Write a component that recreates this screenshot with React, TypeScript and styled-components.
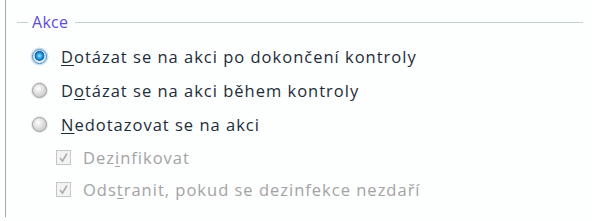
import React from "react";
import styled, { createGlobalStyle } from "styled-components";

const Global = createGlobalStyle`
  html, body { margin: 0; padding: 0; background: #ffffff; }
  body { font-family: "Open Sans", "Noto Sans", sans-serif; }
`;

const Page = styled.div`
  width: 592px;
  height: 221px;
  padding-left: 5px;
  box-sizing: border-box;
  background: #fdfefe;
`;

const Frame = styled.div`
  height: 217px;
  border-left: 1px solid #a9a9a9;
  display: flex;
  flex-direction: column;
  padding: 12px 9px 0 11px;
  box-sizing: border-box;
`;

const Header = styled.div`
  display: flex;
  align-items: center;
  height: 20px;
  gap: 4px;
`;

const Rule = styled.div<{ $grow?: boolean }>`
  height: 1px;
  background: #c4d2cf;
  width: ${(p) => (p.$grow ? "auto" : "11px")};
  flex: ${(p) => (p.$grow ? "1" : "none")};
`;

const Legend = styled.span`
  font-size: 16px;
  letter-spacing: 0.3px;
  color: #5b4fd0;
  padding-right: 3px;
`;

const Options = styled.div`
  display: flex;
  flex-direction: column;
  margin-top: 7px;
  padding-left: 14px;
`;

const Row = styled.label<{ $indent?: boolean; $h: number }>`
  display: flex;
  align-items: center;
  height: ${(p) => p.$h}px;
  padding-left: ${(p) => (p.$indent ? "25px" : "0")};
  gap: ${(p) => (p.$indent ? "12px" : "14px")};
`;

const Label = styled.span<{ $disabled?: boolean }>`
  font-size: 16.5px;
  letter-spacing: 1px;
  font-weight: 500;
  color: ${(p) => (p.$disabled ? "#a3a3a3" : "#1d2d38")};
  white-space: nowrap;
  u { text-decoration: underline; text-underline-offset: 2px; }
`;

const RadioDot = styled.span<{ $checked?: boolean }>`
  width: 15px;
  height: 15px;
  border-radius: 50%;
  flex: none;
  box-sizing: border-box;
  margin-left: 1px;
  border: 1px solid ${(p) => (p.$checked ? "#4f86b3" : "#9c9c9c")};
  background: ${(p) =>
    p.$checked
      ? "radial-gradient(circle at 50% 45%, #9be6ff 0, #2aa2e6 2.5px, #0b5ea8 4.6px, #d6e9f8 5.2px, #eef6fc 100%)"
      : "radial-gradient(circle at 40% 35%, #ffffff 0, #e2e2e2 40%, #bdbdbd 100%)"};
  box-shadow: ${(p) => (p.$checked ? "0 0 0 1.5px #c6e0f4" : "0 0 0 1px #e8e8e8")};
`;

const Check = styled.span`
  width: 15px;
  height: 15px;
  flex: none;
  box-sizing: border-box;
  border: 1px solid #c6c6c6;
  background: #f3f3f3;
  display: flex;
  align-items: center;
  justify-content: center;
`;

function Radio({ checked, children }: { checked?: boolean; children: React.ReactNode }) {
  return (
    <Row $h={34}>
      <RadioDot $checked={checked} />
      <Label>{children}</Label>
    </Row>
  );
}

function CheckItem({ children }: { children: React.ReactNode }) {
  return (
    <Row $h={32} $indent>
      <Check>
        <svg width="11" height="11" viewBox="0 0 11 11">
          <path d="M2 6 L4.5 9 L9 1.5" fill="none" stroke="#acacac" strokeWidth="1.6" />
        </svg>
      </Check>
      <Label $disabled>{children}</Label>
    </Row>
  );
}

export default function App() {
  return (
    <>
      <Global />
      <Page>
        <Frame>
          <Header>
            <Rule />
            <Legend>Akce</Legend>
            <Rule $grow />
          </Header>
          <Options>
            <Radio checked>
              <u>D</u>otázat se na akci po dokončení kontroly
            </Radio>
            <Radio>
              D<u>o</u>tázat se na akci během kontroly
            </Radio>
            <Radio>
              <u>N</u>edotazovat se na akci
            </Radio>
            <CheckItem>
              Dez<u>i</u>nfikovat
            </CheckItem>
            <CheckItem>
              Ods<u>t</u>ranit, pokud se dezinfekce nezdaří
            </CheckItem>
          </Options>
        </Frame>
      </Page>
    </>
  );
}
